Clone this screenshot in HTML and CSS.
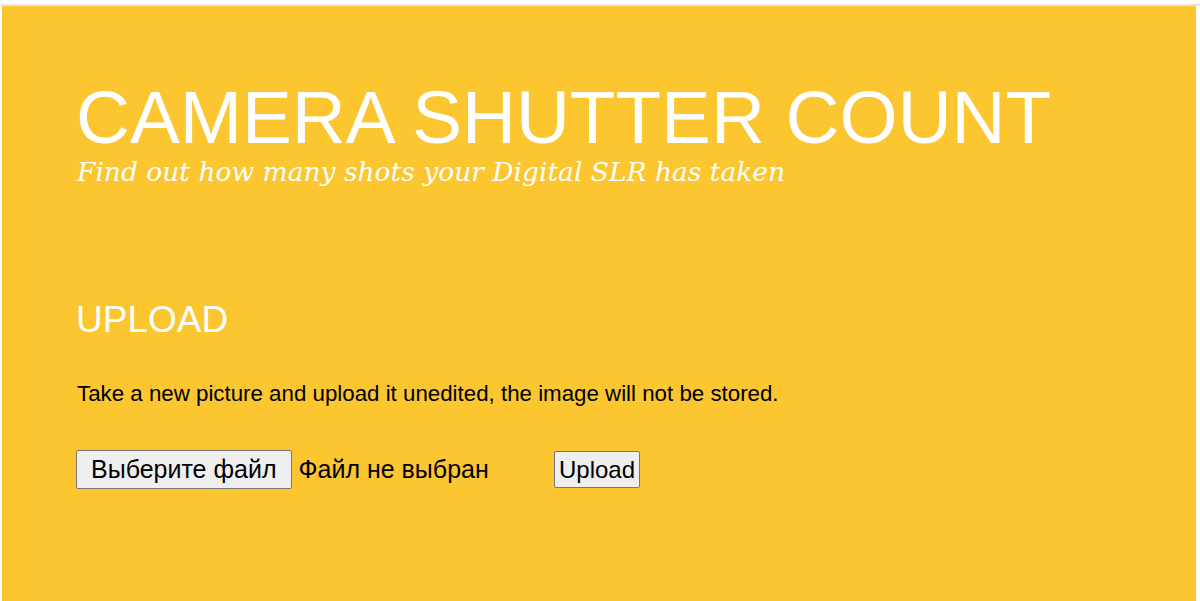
FILE: index.html
```
<!doctype html>
<html lang="en">
<head>
    <meta charset="UTF-8">
    <meta name="viewport" content="width=device-width, initial-scale=1.0">
    <title>Camera Shutter Count</title>
    <link rel="stylesheet" href="styles.css">
</head>
<body>
    <div class="topline"></div>
    <div class="page">
        <div class="header">
            <h1>CAMERA SHUTTER COUNT</h1>
            <p class="tagline">Find out how many shots your Digital SLR has taken</p>
        </div>
        <div class="upload">
            <h2>UPLOAD</h2>
            <p class="note">Take a new picture and upload it unedited, the image will not be stored.</p>
            <form class="form" action="" onsubmit="return false">
                <label class="file">
                    <span class="file-btn">Выберите файл</span>
                    <span class="file-name">Файл не выбран</span>
                </label>
                <button class="submit" type="submit">Upload</button>
            </form>
        </div>
    </div>
</body>
</html>
```
FILE: styles.css
```
*{
    padding:0;
    margin:0;
}
body{
    background:#fff;
    font-family:"Liberation Sans", Arial, sans-serif;
}
.topline{
    height:2px;
    margin-top:4px;
    background:#e6e6e6;
}
.page{
    margin:0 4px 0 2px;
    height:595px;
    padding:0 74px;
    background:#fbc630;
    color:#fff;
}
.header{
    padding-top:70px;
}
.header h1{
    font-size:74.7px;
    font-weight:normal;
    line-height:82px;
}
.tagline{
    font-family:"DejaVu Serif", Georgia, serif;
    font-style:italic;
    font-size:26.5px;
    line-height:30px;
    margin:-1px 0 0 1px;
}
.upload{
    padding-top:112px;
}
.upload h2{
    font-size:37px;
    font-weight:normal;
    line-height:42px;
}
.note{
    color:#000;
    font-size:22.3px;
    line-height:24px;
    margin:41px 0 0 1px;
}
.form{
    display:flex;
    align-items:center;
    margin-top:44px;
}
.file{
    display:flex;
    align-items:center;
    width:478px;
    color:#000;
    font-size:25px;
}
.file-btn{
    display:block;
    padding:3px 14px;
    background:#efefef;
    border:1px solid #767676;
    border-radius:2px;
    line-height:31px;
    margin-right:7px;
}
.submit{
    font-family:"Liberation Sans", Arial, sans-serif;
    font-size:24px;
    line-height:31px;
    padding:2px 4px;
    color:#000;
    background:#efefef;
    border:1px solid #767676;
    border-radius:2px;
}
```
